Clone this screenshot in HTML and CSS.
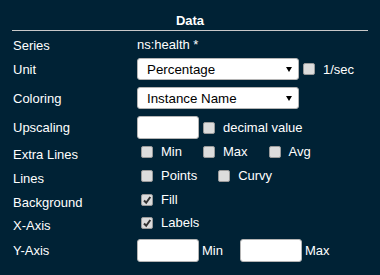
FILE: index.html
```html
<!DOCTYPE html>
<html lang="en">
<head>
    <meta charset="UTF-8">
    <meta name="viewport" content="width=device-width, initial-scale=1.0">
    <title>Data</title>
    <link rel="stylesheet" href="styles.css">
</head>
<body>

<div class="panel">
    <h3 class="title">Data</h3>

    <div class="form">
        <div class="lbl">Series</div>
        <div class="val series">ns:health *</div>

        <div class="lbl">Unit</div>
        <div class="val">
            <select class="sel">
                <option>Percentage</option>
                <option>Bytes</option>
                <option>Count</option>
            </select>
            <label class="opt"><input type="checkbox" class="cb">1/sec</label>
        </div>

        <div class="lbl">Coloring</div>
        <div class="val">
            <select class="sel">
                <option>Instance Name</option>
                <option>Series</option>
            </select>
        </div>

        <div class="lbl">Upscaling</div>
        <div class="val">
            <input type="text" class="num">
            <label class="opt"><input type="checkbox" class="cb">decimal value</label>
        </div>

        <div class="lbl low">Extra Lines</div>
        <div class="val">
            <label class="opt"><input type="checkbox" class="cb">Min</label>
            <label class="opt"><input type="checkbox" class="cb">Max</label>
            <label class="opt"><input type="checkbox" class="cb">Avg</label>
        </div>

        <div class="lbl low">Lines</div>
        <div class="val">
            <label class="opt"><input type="checkbox" class="cb">Points</label>
            <label class="opt"><input type="checkbox" class="cb">Curvy</label>
        </div>

        <div class="lbl low">Background</div>
        <div class="val">
            <label class="opt"><input type="checkbox" class="cb" checked>Fill</label>
        </div>

        <div class="lbl low">X-Axis</div>
        <div class="val">
            <label class="opt"><input type="checkbox" class="cb" checked>Labels</label>
        </div>

        <div class="lbl">Y-Axis</div>
        <div class="val">
            <input type="text" class="num">
            <span class="unit">Min</span>
            <input type="text" class="num">
            <span class="unit">Max</span>
        </div>
    </div>
</div>

</body>
</html>
```

FILE: styles.css
```css
body {
    margin: 0;
    background: #002235;
    color: #fff;
    font-family: "Liberation Sans", Arial, sans-serif;
    font-size: 13px;
    line-height: 15px;
}
.panel {
    padding: 13px 12px 0;
}
.title {
    margin: 0;
    padding-bottom: 2px;
    border-bottom: 1px solid #c8c8c8;
    font-size: 13px;
    line-height: 15px;
    text-align: center;
}
.form {
    display: grid;
    grid-template-columns: 125px 1fr;
    grid-template-rows: 19px 28px 30px 29px 19px 29px 19px 27px 29px;
    align-items: center;
    margin-top: 5px;
}
.lbl {
    padding-left: 1px;
}
.lbl.low {
    padding-top: 6px;
}
.val {
    display: flex;
    align-items: center;
}
.val.series {
    padding-bottom: 3px;
}
.sel {
    appearance: none;
    -webkit-appearance: none;
    box-sizing: border-box;
    width: 162px;
    height: 22px;
    margin: 0;
    padding: 0 0 0 9px;
    border: 1px solid #b4b4b4;
    border-radius: 3px;
    background: #fff url("data:image/svg+xml,%3Csvg xmlns='http://www.w3.org/2000/svg' width='6' height='5'%3E%3Cpath d='M0 0h6L3 5z' fill='%23000'/%3E%3C/svg%3E") no-repeat right 6px center;
    color: #000;
    font-family: "Liberation Sans", Arial, sans-serif;
    font-size: 13.333px;
}
.num {
    box-sizing: border-box;
    width: 62px;
    height: 23px;
    margin: 0;
    padding: 0 4px;
    border: 1px solid #b4b4b4;
    border-radius: 3px;
    background: #fff;
}
.opt {
    display: inline-flex;
    align-items: center;
    margin-right: 17px;
}
.cb {
    appearance: none;
    -webkit-appearance: none;
    box-sizing: border-box;
    width: 12px;
    height: 12px;
    margin: 0 8px 0 4px;
    border: 1px solid #9a9a9a;
    border-radius: 2px;
    background: #dcdcdc;
}
.cb:checked {
    background: #dcdcdc url("data:image/svg+xml,%3Csvg xmlns='http://www.w3.org/2000/svg' width='10' height='10'%3E%3Cpath d='M2 5.5l2.2 2.3L8.3 2' stroke='%23333' stroke-width='2' fill='none'/%3E%3C/svg%3E") no-repeat center;
}
.unit {
    margin: 0 17px 0 3px;
}
```
